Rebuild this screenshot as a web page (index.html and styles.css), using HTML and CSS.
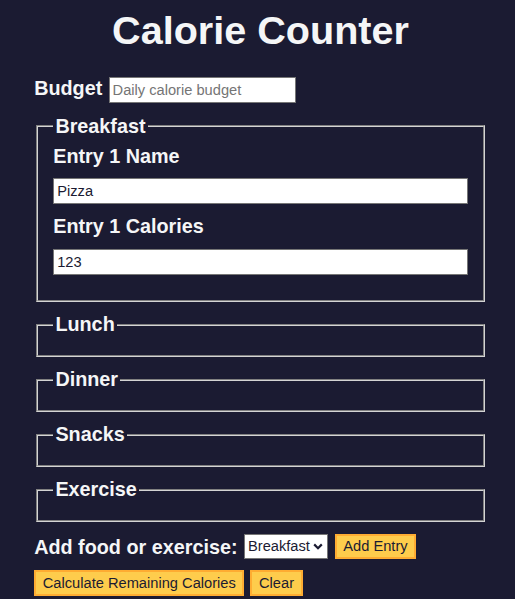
FILE: index.html
```html
<!DOCTYPE html>
<html lang="en">
<head>
<meta charset="utf-8">
<title>Calorie Counter</title>
<link rel="stylesheet" href="styles.css">
</head>
<body>
  <main>
    <h1>Calorie Counter</h1>
    <div class="container">
      <form id="calorie-counter">
        <div class="budget-row">
          <label for="budget">Budget</label>
          <input class="budget-input" type="number" min="0" id="budget" placeholder="Daily calorie budget">
        </div>
        <fieldset id="breakfast">
          <legend>Breakfast</legend>
          <div class="input-container">
            <label for="breakfast-entry-1-name">Entry 1 Name</label>
            <input type="text" id="breakfast-entry-1-name" placeholder="Name" value="Pizza">
            <label for="breakfast-entry-1-calories">Entry 1 Calories</label>
            <input class="last-input" type="number" min="0" id="breakfast-entry-1-calories" placeholder="Calories" value="123">
          </div>
        </fieldset>
        <fieldset id="lunch">
          <legend>Lunch</legend>
          <div class="input-container"></div>
        </fieldset>
        <fieldset id="dinner">
          <legend>Dinner</legend>
          <div class="input-container"></div>
        </fieldset>
        <fieldset id="snacks">
          <legend>Snacks</legend>
          <div class="input-container"></div>
        </fieldset>
        <fieldset id="exercise">
          <legend>Exercise</legend>
          <div class="input-container"></div>
        </fieldset>
        <div class="controls">
          <label for="entry-dropdown">Add food or exercise:</label>
          <span class="select-wrap">
            <select id="entry-dropdown" name="options">
              <option value="breakfast" selected>Breakfast</option>
              <option value="lunch">Lunch</option>
              <option value="dinner">Dinner</option>
              <option value="snacks">Snacks</option>
              <option value="exercise">Exercise</option>
            </select>
            <svg class="chevron" width="10" height="7" viewBox="0 0 10 7" aria-hidden="true">
              <path d="M1.2 1.4 L5 5.2 L8.8 1.4" fill="none" stroke="#1b1b32" stroke-width="2.2"/>
            </svg>
          </span>
          <button type="button" id="add-entry">Add Entry</button>
        </div>
        <div class="actions">
          <button type="submit">Calculate Remaining Calories</button>
          <button type="button" id="clear">Clear</button>
        </div>
      </form>
    </div>
  </main>
</body>
</html>
```
FILE: styles.css
```css
:root {
  --light-grey: #f5f6f7;
  --dark-blue: #1b1b32;
  --light-yellow: #fecc4c;
  --dark-yellow: #feac32;
}

html, body {
  margin: 0;
  height: 100%;
  overflow: hidden;
}

body {
  background-color: var(--dark-blue);
  color: var(--light-grey);
  font-family: "Liberation Sans", Arial, Helvetica, sans-serif;
  font-size: 19.8px;
  padding: 8px 3px 0 9px;
  box-sizing: border-box;
}

h1 {
  margin: 0;
  text-align: center;
  font-size: 39.6px;
  line-height: 45.5px;
  font-weight: bold;
}

.container {
  width: 90%;
  margin: 23.7px auto 0;
}

label,
legend {
  font-weight: bold;
  line-height: 22.75px;
}

input,
select,
button {
  font-family: "Liberation Sans", Arial, Helvetica, sans-serif;
  font-size: 14.67px;
  color: var(--dark-blue);
  box-sizing: border-box;
}

input {
  height: 26px;
  background: #fff;
  border: 1.5px solid #767676;
  padding: 1px 3px;
  margin: 0;
  border-radius: 0;
}

input::placeholder {
  color: #757575;
}

.budget-row {
  display: flex;
  align-items: flex-start;
  gap: 6.3px;
  margin-bottom: 12.3px;
}

.budget-input {
  width: 187px;
  height: 25.5px;
}

fieldset {
  margin: 0 2.2px 11px;
  padding: 6.93px 14.85px 12.4px;
  border: 2px groove #d4d4d4;
  min-width: 0;
}

legend {
  padding: 0 2.2px;
}

.input-container {
  display: flex;
  flex-direction: column;
}

.input-container label {
  margin-bottom: 11px;
}

.input-container input {
  margin-bottom: 11px;
}

.input-container .last-input {
  margin-bottom: 12.6px;
}

.controls {
  display: flex;
  align-items: center;
  height: 26px;
  margin-top: 0.5px;
}

.controls label {
  margin-right: 6.5px;
  margin-top: 1px;
}

.select-wrap {
  position: relative;
  display: block;
  margin-right: 6.7px;
}

select {
  display: block;
  appearance: none;
  -webkit-appearance: none;
  height: 24.7px;
  width: 84px;
  background: #fff;
  border: 1.5px solid #767676;
  border-radius: 0;
  padding: 0 14px 0 3px;
  margin: 0;
}

.chevron {
  position: absolute;
  right: 5px;
  top: 9px;
  pointer-events: none;
}

button {
  height: 25.7px;
  padding: 0 6.6px;
  background-color: var(--light-yellow);
  border: 2.2px solid var(--dark-yellow);
  border-radius: 0;
  cursor: pointer;
}

.actions {
  display: flex;
  gap: 6px;
  margin-top: 11px;
}
```
